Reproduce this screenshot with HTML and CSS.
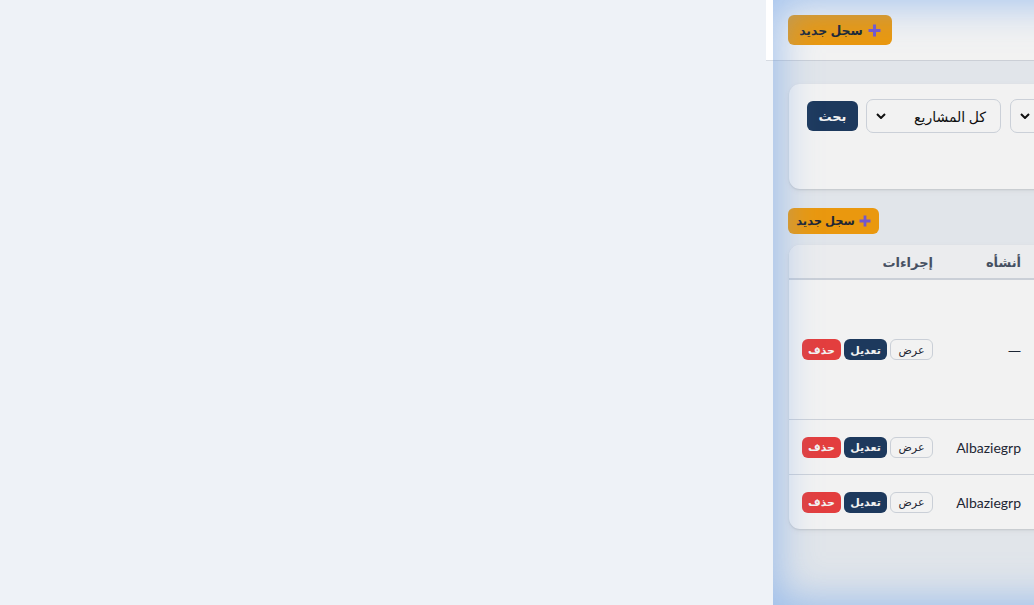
FILE: index.html
```html
<!DOCTYPE html>
<html lang="ar">
<head>
<meta charset="utf-8">
<link rel="stylesheet" href="styles.css">
</head>
<body>
<div class="spacer"></div>
<div class="app">
  <header class="topbar">
    <button class="btn-add btn-add-lg" dir="rtl"><svg class="plus" viewBox="0 0 12 12" width="13" height="13"><path d="M6 0.5v11M0.5 6h11" stroke="#7b5cd8" stroke-width="2.8" stroke-linecap="butt"/></svg><span>سجل جديد</span></button>
  </header>
  <main class="main">
    <section class="card filters">
      <button class="btn-search">بحث</button>
      <div class="select select-projects" dir="rtl"><span>كل المشاريع</span><svg class="chev" viewBox="0 0 10 6" width="10" height="6"><path d="M1 1l4 4 4-4" fill="none" stroke="#111" stroke-width="2"/></svg></div>
      <div class="select select-more" dir="rtl"><span></span><svg class="chev" viewBox="0 0 10 6" width="10" height="6"><path d="M1 1l4 4 4-4" fill="none" stroke="#111" stroke-width="2"/></svg></div>
    </section>
    <button class="btn-add btn-add-sm" dir="rtl"><svg class="plus" viewBox="0 0 12 12" width="12" height="12"><path d="M6 0.5v11M0.5 6h11" stroke="#7b5cd8" stroke-width="2.8"/></svg><span>سجل جديد</span></button>
    <section class="card table">
      <div class="row head">
        <div class="cell actions-cell" dir="rtl">إجراءات</div>
        <div class="cell" dir="rtl">أنشأه</div>
        <div class="cell"></div>
      </div>
      <div class="row tall">
        <div class="cell actions-cell"><span class="act act-view">عرض</span><span class="act act-edit">تعديل</span><span class="act act-del">حذف</span></div>
        <div class="cell"><span class="dash">—</span></div>
        <div class="cell"></div>
      </div>
      <div class="row">
        <div class="cell actions-cell"><span class="act act-view">عرض</span><span class="act act-edit">تعديل</span><span class="act act-del">حذف</span></div>
        <div class="cell">Albaziegrp</div>
        <div class="cell"></div>
      </div>
      <div class="row last">
        <div class="cell actions-cell"><span class="act act-view">عرض</span><span class="act act-edit">تعديل</span><span class="act act-del">حذف</span></div>
        <div class="cell">Albaziegrp</div>
        <div class="cell"></div>
      </div>
    </section>
  </main>
  <div class="glass"></div>
</div>
</body>
</html>
```
FILE: styles.css
```css
html, body {
  margin: 0;
  height: 605px;
  overflow: hidden;
}
body {
  width: 1034px;
  display: flex;
  background: #eef2f7;
  font-family: Lato, "Noto Sans", "DejaVu Sans", sans-serif;
  color: #1f2937;
}
.spacer {
  width: 766px;
  flex: none;
}
.app {
  width: 560px;
  flex: none;
  position: relative;
  height: 605px;
}
.topbar {
  height: 60px;
  background: #ffffff;
  border-bottom: 1px solid #d6dbe2;
  display: flex;
  align-items: center;
  padding-left: 22px;
}
.btn-add {
  display: flex;
  align-items: center;
  justify-content: center;
  gap: 6px;
  background: #f7a10f;
  border: none;
  border-radius: 6px;
  color: #1f2937;
  font-family: inherit;
  font-weight: 600;
  padding: 0;
  cursor: pointer;
}
.btn-add-lg {
  width: 104px;
  height: 30px;
  font-size: 12.5px;
  gap: 5px;
}
.btn-add-sm {
  width: 91px;
  height: 26px;
  font-size: 11.5px;
  gap: 4px;
  margin: 19px 0 11px 15px;
}
.plus {
  flex: none;
}
.main {
  margin-left: 7px;
  padding: 23px 0 0 0;
}
.card {
  background: #ffffff;
  border-radius: 11px;
  box-shadow: 0 1px 2px rgba(0,0,0,0.10), 0 2px 6px rgba(0,0,0,0.05);
  margin-left: 16px;
}
.filters {
  height: 105px;
  box-sizing: border-box;
  padding: 15px 18px;
  display: flex;
  align-items: flex-start;
  gap: 8px;
}
.btn-search {
  margin-top: 2px;
  width: 51px;
  height: 30px;
  border: none;
  border-radius: 6px;
  background: #1f3d63;
  color: #fff;
  font-family: inherit;
  font-weight: 700;
  font-size: 13px;
  padding: 0;
}
.select {
  height: 34px;
  box-sizing: border-box;
  border: 1px solid #d6dce4;
  border-radius: 7px;
  background: #fff;
  display: flex;
  align-items: center;
  padding: 0 14px 0 9px;
  font-size: 14px;
  color: #111;
}
.select span {
  flex: 1;
}
.select-projects {
  width: 135px;
  margin-right: 1px;
}
.select-more {
  width: 160px;
}
.table {
  overflow: hidden;
}
.row {
  display: grid;
  grid-template-columns: 156px 88px 1fr;
  border-bottom: 1px solid #d8dde4;
  height: 54px;
  align-items: center;
}
.row.head {
  height: 33px;
  background: #f8f9fb;
  border-bottom: 2px solid #d5dbe3;
  font-size: 13px;
  font-weight: 600;
  color: #4a5568;
}
.row.tall {
  height: 139px;
}
.row.last {
  border-bottom: none;
}
.cell {
  text-align: right;
  padding-right: 12px;
  font-size: 14px;
  white-space: nowrap;
  direction: ltr;
}
.dash {
  font-family: "Noto Sans", sans-serif;
  font-size: 13px;
}
.row.head .cell {
  font-size: 13px;
}
.actions-cell {
  display: flex;
  justify-content: flex-start;
  gap: 3px;
  padding: 0 0 0 13px;
}
.row.head .actions-cell {
  display: block;
  padding-right: 12px;
  padding-left: 0;
}
.act {
  height: 21px;
  box-sizing: border-box;
  border-radius: 6px;
  font-size: 11px;
  font-weight: 700;
  display: flex;
  align-items: center;
  justify-content: center;
}
.act-del {
  order: 1;
  width: 39px;
  background: #f04242;
  color: #fff;
}
.act-edit {
  order: 2;
  width: 43px;
  background: #1f3d63;
  color: #fff;
}
.act-view {
  order: 3;
  width: 43px;
  background: #fff;
  border: 1px solid #d5dbe3;
  color: #1f2937;
  font-weight: 500;
}
.glass {
  position: absolute;
  left: 7px;
  top: 0;
  bottom: 0;
  right: 0;
  pointer-events: none;
  background: rgba(0,0,0,0.05);
  box-shadow: inset 0 0 40px 4px rgba(105,160,235,0.6);
}
```
